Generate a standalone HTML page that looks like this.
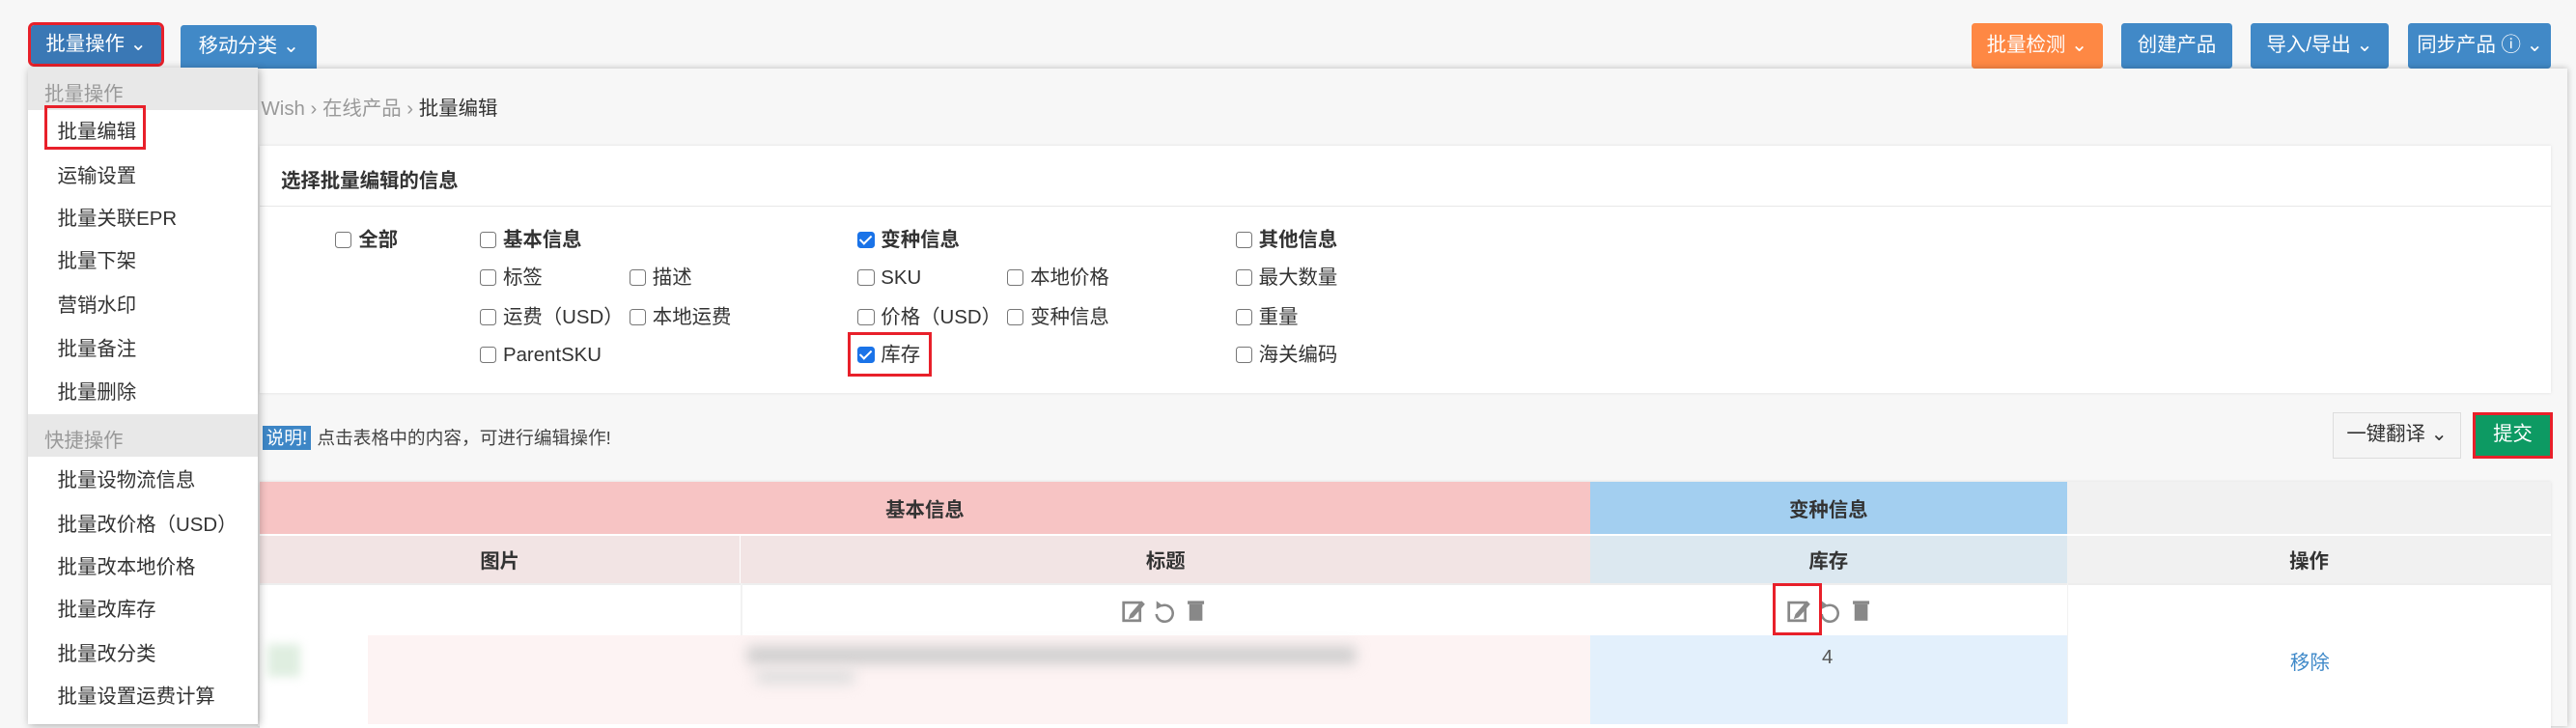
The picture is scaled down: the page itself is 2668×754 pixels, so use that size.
<!DOCTYPE html>
<html><head><meta charset="utf-8"><style>
html,body{margin:0;padding:0}
body{width:1568px;height:441px;zoom:1.70153;background:#f7f7f7;font-family:"Liberation Sans","Noto Sans CJK SC",sans-serif;font-size:12px;color:#333;position:relative;overflow:hidden}
.a{position:absolute}
.btn{position:absolute;color:#fff;text-align:center;border-radius:2px;line-height:28px;font-size:12px;top:14px;height:28px}
.chk{display:inline-block;width:9px;height:9px;border:1px solid #777;border-radius:2px;vertical-align:-1px;margin-right:4px;background:#fff}
.on{background:#1a73e8;border-color:#1a73e8;position:relative}
.on:after{content:"";position:absolute;left:2.5px;top:0;width:3px;height:6px;border:solid #fff;border-width:0 1.5px 1.5px 0;transform:rotate(45deg)}
.cb{position:absolute;font-size:12px;line-height:14px;height:14px;white-space:nowrap;margin-top:2px}
.b{font-weight:bold}
.mi{position:absolute;left:35px;font-size:12px;color:#333;line-height:14px;margin-top:2px}
.cell{position:absolute;display:flex;align-items:center;justify-content:center;box-sizing:border-box}
</style></head><body>
<div class="btn" style="left:19px;top:15px;width:79px;height:24px;line-height:24px;background:#3a78b5;outline:2px solid #e8202a">批量操作 ⌄</div>
<div class="btn" style="left:110px;top:15px;width:83px;height:30px;line-height:27px;background:#4189c7">移动分类 ⌄</div>
<div class="btn" style="left:1200px;width:80px;background:#fe8844">批量检测 ⌄</div>
<div class="btn" style="left:1291px;width:68px;background:#4189c7">创建产品</div>
<div class="btn" style="left:1370px;width:84px;background:#4189c7">导入/导出 ⌄</div>
<div class="btn" style="left:1466px;width:87px;background:#4189c7">同步产品 ⓘ ⌄</div>

<div class="a" style="left:157px;top:42px;width:1406px;height:400px;background:#f7f7f7;box-shadow:0 0 4px rgba(0,0,0,.25)"></div>
<div class="a" style="left:159px;top:56px;color:#999">Wish › 在线产品 › <span style="color:#333">批量编辑</span></div>

<div class="a" style="left:158px;top:89px;width:1395px;height:150px;background:#fff;box-shadow:0 0 2px rgba(0,0,0,.1)"></div>
<div class="a b" style="left:171px;top:100px">选择批量编辑的信息</div>
<div class="a" style="left:158px;top:125px;width:1395px;height:1px;background:#e8e8e8"></div>

<div class="cb b" style="left:204px;top:138px"><span class="chk"></span>全部</div>
<div class="cb b" style="left:292px;top:138px"><span class="chk"></span>基本信息</div>
<div class="cb" style="left:292px;top:161px"><span class="chk"></span>标签</div>
<div class="cb" style="left:383px;top:161px"><span class="chk"></span>描述</div>
<div class="cb" style="left:292px;top:185px"><span class="chk"></span>运费（USD）</div>
<div class="cb" style="left:383px;top:185px"><span class="chk"></span>本地运费</div>
<div class="cb" style="left:292px;top:208px"><span class="chk"></span>ParentSKU</div>
<div class="cb b" style="left:522px;top:138px"><span class="chk on"></span>变种信息</div>
<div class="cb" style="left:522px;top:161px"><span class="chk"></span>SKU</div>
<div class="cb" style="left:613px;top:161px"><span class="chk"></span>本地价格</div>
<div class="cb" style="left:522px;top:185px"><span class="chk"></span>价格（USD）</div>
<div class="cb" style="left:613px;top:185px"><span class="chk"></span>变种信息</div>
<div class="cb" style="left:522px;top:208px"><span class="chk on"></span>库存</div>
<div class="a" style="left:516px;top:202px;width:51px;height:27px;border:2px solid #e8202a;box-sizing:border-box"></div>
<div class="cb b" style="left:752px;top:138px"><span class="chk"></span>其他信息</div>
<div class="cb" style="left:752px;top:161px"><span class="chk"></span>最大数量</div>
<div class="cb" style="left:752px;top:185px"><span class="chk"></span>重量</div>
<div class="cb" style="left:752px;top:208px"><span class="chk"></span>海关编码</div>

<div class="a" style="left:160px;top:259px;width:29px;height:15px;background:#3d86c6;color:#fff;font-size:11px;line-height:15px;text-align:center">说明!</div>
<div class="a" style="left:193px;top:259px;font-size:11px;color:#444;line-height:15px">点击表格中的内容，可进行编辑操作!</div>

<div class="a" style="left:1420px;top:251px;width:78px;height:28px;border:1px solid #ddd;background:#f5f5f5;box-sizing:border-box;text-align:center;line-height:26px">一键翻译 ⌄</div>
<div class="a" style="left:1505px;top:251px;width:49px;height:28px;background:#0d9a63;border:2px solid #e8202a;box-sizing:border-box;color:#fff;text-align:center;line-height:24px">提交</div>

<div class="a" style="left:158px;top:293px;width:1395px;height:150px;background:#fff;box-shadow:0 0 2px rgba(0,0,0,.1)"></div>
<div class="cell b" style="left:158px;top:293px;width:810px;height:32px;background:#f7c4c4">基本信息</div>
<div class="cell b" style="left:968px;top:293px;width:290px;height:32px;background:#a3cff0">变种信息</div>
<div class="cell" style="left:1258px;top:293px;width:295px;height:32px;background:#f1f1f1"></div>
<div class="cell b" style="left:158px;top:326px;width:293px;height:29px;background:#f2e4e4;border-right:1px solid #fff">图片</div>
<div class="cell b" style="left:451px;top:326px;width:517px;height:29px;background:#f2e4e4">标题</div>
<div class="cell b" style="left:968px;top:326px;width:290px;height:29px;background:#dce8f0">库存</div>
<div class="cell b" style="left:1258px;top:326px;width:295px;height:29px;background:#f1f1f1">操作</div>
<div class="a" style="left:158px;top:355px;width:1395px;height:1px;background:#eee"></div>
<div class="a" style="left:451px;top:355px;width:1px;height:86px;background:#f2f2f2"></div>
<div class="a" style="left:1258px;top:355px;width:1px;height:86px;background:#f2f2f2"></div>

<svg class="a" style="left:683px;top:364px" width="54" height="16" viewBox="0 0 54 16">
<rect x="1" y="3" width="10" height="11" fill="none" stroke="#888" stroke-width="1.6"/><path d="M5 10 L12 2 L14 4 L7 12 L4 13Z" fill="#888"/>
<path d="M24 5 A5 5 0 1 1 21 10" fill="none" stroke="#888" stroke-width="1.5"/><path d="M21 2 L25 5 L21 7Z" fill="#888"/>
<rect x="41" y="4" width="8" height="10" fill="#888"/><rect x="40" y="2" width="10" height="2" fill="#888"/>
</svg>
<svg class="a" style="left:1088px;top:364px" width="54" height="16" viewBox="0 0 54 16">
<rect x="1" y="3" width="10" height="11" fill="none" stroke="#888" stroke-width="1.6"/><path d="M5 10 L12 2 L14 4 L7 12 L4 13Z" fill="#888"/>
<path d="M24 5 A5 5 0 1 1 21 10" fill="none" stroke="#888" stroke-width="1.5"/><path d="M21 2 L25 5 L21 7Z" fill="#888"/>
<rect x="41" y="4" width="8" height="10" fill="#888"/><rect x="40" y="2" width="10" height="2" fill="#888"/>
</svg>
<div class="a" style="left:1079px;top:355px;width:30px;height:32px;border:2px solid #e8202a;box-sizing:border-box"></div>

<div class="a" style="left:158px;top:387px;width:810px;height:54px;background:#fdf3f3"></div>
<div class="a" style="left:158px;top:387px;width:66px;height:54px;background:#fff"></div>
<div class="a" style="left:163px;top:392px;width:20px;height:20px;background:#dfeee0;filter:blur(3px)"></div>
<div class="a" style="left:455px;top:394px;width:370px;height:10px;background:#ccc;filter:blur(4px)"></div>
<div class="a" style="left:460px;top:408px;width:60px;height:8px;background:#ddd;filter:blur(4px)"></div>
<div class="a" style="left:968px;top:387px;width:290px;height:54px;background:#e3f0fc"></div>
<div class="a" style="left:1109px;top:394px;color:#555">4</div>
<div class="a" style="left:1394px;top:393px;color:#3f89c9">移除</div>

<div class="a" style="left:17px;top:41px;width:140px;height:400px;background:#fff;box-shadow:1px 1px 5px rgba(0,0,0,.3)"></div>
<div class="a" style="left:17px;top:41px;width:140px;height:26px;background:#e8e8e8"></div>
<div class="a" style="left:27px;top:47px;color:#999">批量操作</div>
<div class="a" style="left:27px;top:64px;width:62px;height:27px;border:2px solid #e8202a;box-sizing:border-box"></div>
<div class="mi" style="top:72px">批量编辑</div>
<div class="mi" style="top:99px">运输设置</div>
<div class="mi" style="top:125px">批量关联EPR</div>
<div class="mi" style="top:151px">批量下架</div>
<div class="mi" style="top:178px">营销水印</div>
<div class="mi" style="top:204px">批量备注</div>
<div class="mi" style="top:231px">批量删除</div>
<div class="a" style="left:17px;top:252px;width:140px;height:26px;background:#e8e8e8"></div>
<div class="a" style="left:27px;top:258px;color:#999">快捷操作</div>
<div class="mi" style="top:284px">批量设物流信息</div>
<div class="mi" style="top:311px">批量改价格（USD）</div>
<div class="mi" style="top:337px">批量改本地价格</div>
<div class="mi" style="top:363px">批量改库存</div>
<div class="mi" style="top:390px">批量改分类</div>
<div class="mi" style="top:416px">批量设置运费计算</div>
</body></html>
